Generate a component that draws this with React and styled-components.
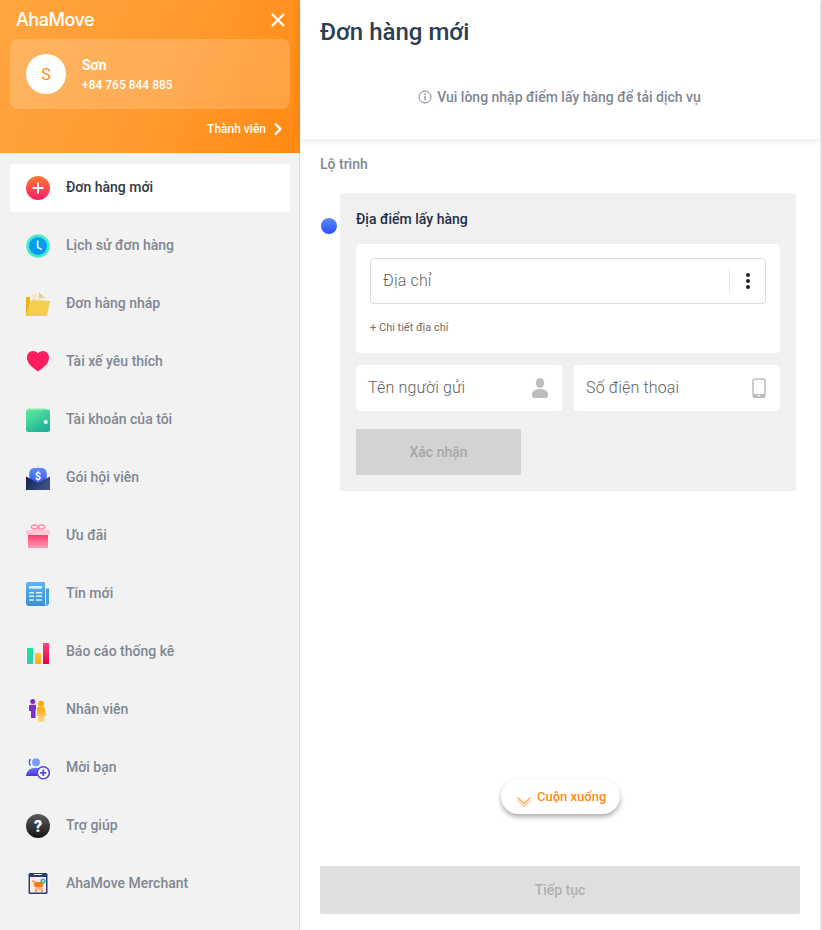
import React from "react";
import styled, { createGlobalStyle } from "styled-components";

const Global = createGlobalStyle`
  html, body { margin: 0; padding: 0; background: #fff; }
  body { font-family: Roboto, "Noto Sans", sans-serif; overflow: hidden; }
  * { box-sizing: border-box; }
`;

const Page = styled.div`
  display: flex;
  width: 822px;
  height: 930px;
  overflow: hidden;
`;

const Sidebar = styled.aside`
  width: 300px;
  height: 930px;
  flex: none;
  display: flex;
  flex-direction: column;
  background: #f2f2f2;
`;

const Head = styled.header`
  height: 153px;
  flex: none;
  padding: 0 10px;
  background: linear-gradient(115deg, #ffa53f 0%, #ff9a2e 55%, #ff8a12 100%);
  color: #fff;
  display: flex;
  flex-direction: column;
`;

const LogoRow = styled.div`
  height: 39px;
  padding: 0 4px 0 6px;
  display: flex;
  align-items: center;
  justify-content: space-between;
`;

const Logo = styled.span`
  font-family: Inter, sans-serif;
  font-size: 18px;
  font-weight: 500;
  letter-spacing: -0.45px;
`;

const Profile = styled.div`
  height: 70px;
  padding: 0 16px;
  display: flex;
  align-items: center;
  gap: 16px;
  border-radius: 8px;
  background: rgba(255, 255, 255, 0.18);
`;

const Avatar = styled.div`
  width: 40px;
  height: 40px;
  border-radius: 50%;
  background: #fff;
  color: #ff8a12;
  font-size: 16px;
  display: flex;
  align-items: center;
  justify-content: center;
`;

const ProfileText = styled.div`
  display: flex;
  flex-direction: column;
  gap: 5px;
`;

const ProfileName = styled.div`
  font-size: 14px;
  line-height: 16px;
  font-weight: 700;
`;

const ProfilePhone = styled.div`
  font-size: 12px;
  line-height: 14px;
  font-weight: 500;
`;

const MemberRow = styled.div`
  flex: 1;
  padding: 0 7px 4px 0;
  display: flex;
  align-items: center;
  justify-content: flex-end;
  gap: 7px;
  font-size: 12px;
  font-weight: 500;
`;

const Nav = styled.nav`
  flex: 1;
  padding-top: 11px;
  display: flex;
  flex-direction: column;
  gap: 10px;
  border-right: 1px solid #d9d9d9;
`;

const NavItem = styled.div`
  height: 48px;
  flex: none;
  margin: 0 9px 0 10px;
  padding-left: 16px;
  display: flex;
  align-items: center;
  gap: 16px;
  border-radius: 4px;
  background: ${(p) => (p.$active ? "#fff" : "transparent")};
  color: ${(p) => (p.$active ? "#333a45" : "#808792")};
  font-size: 14px;
  font-weight: 500;
`;

const NavLabel = styled.span`
  padding-bottom: 2px;
`;

const IconBox = styled.svg`
  width: 24px;
  height: 24px;
  flex: none;
  overflow: hidden;
`;

const Main = styled.main`
  position: relative;
  flex: none;
  width: 520px;
  height: 930px;
  display: flex;
  flex-direction: column;
  background: #fff;
`;

const Scrollbar = styled.div`
  flex: 1;
  height: 930px;
  background: #e6e6e6;
`;

const TopBar = styled.div`
  height: 139px;
  flex: none;
  padding: 18px 20px 0;
  background: #fff;
  box-shadow: 0 2px 8px rgba(0, 0, 0, 0.1);
  display: flex;
  flex-direction: column;
`;

const Title = styled.h1`
  margin: 0;
  font-size: 24px;
  line-height: 28px;
  font-weight: 500;
  color: #2c3e50;
`;

const Notice = styled.div`
  margin-top: 39px;
  padding-right: 1px;
  display: flex;
  align-items: center;
  justify-content: center;
  gap: 5px;
  font-size: 14px;
  line-height: 24px;
  font-weight: 500;
  color: #808792;
`;

const SectionLabel = styled.div`
  margin: 17px 20px 0;
  font-size: 14px;
  line-height: 16px;
  font-weight: 500;
  color: #808792;
`;

const RouteRow = styled.div`
  margin: 21px 24px 0 21px;
  display: flex;
  align-items: flex-start;
  gap: 3px;
`;

const Dot = styled.div`
  width: 16px;
  height: 16px;
  margin-top: 25px;
  flex: none;
  border-radius: 50%;
  background: linear-gradient(180deg, #5b8cf5 0%, #2a4dff 100%);
`;

const StopCard = styled.section`
  flex: 1;
  height: 298px;
  padding: 16px;
  border-radius: 4px;
  background: #f0f0f0;
`;

const StopTitle = styled.div`
  font-size: 14px;
  line-height: 20px;
  font-weight: 500;
  color: #1f2d45;
`;

const AddressCard = styled.div`
  margin-top: 15px;
  height: 109px;
  padding: 14px;
  background: #fff;
  border-radius: 4px;
`;

const AddressInput = styled.div`
  height: 46px;
  padding-left: 12px;
  border: 1px solid #dcdcdc;
  border-radius: 4px;
  display: flex;
  align-items: center;
`;

const FieldText = styled.span`
  flex: 1;
  padding-bottom: 2px;
  font-size: 16px;
  font-weight: 300;
  letter-spacing: 0.17px;
  color: #5f5f5f;
`;

const MenuButton = styled.div`
  width: 36px;
  height: 24px;
  border-left: 1px solid #e6e6e6;
  display: flex;
  flex-direction: column;
  align-items: center;
  justify-content: center;
  gap: 2px;
`;

const MenuDot = styled.i`
  width: 4px;
  height: 4px;
  border-radius: 50%;
  background: #222;
`;

const DetailLink = styled.div`
  margin-top: 17px;
  font-size: 11px;
  line-height: 14px;
  color: #7b6a66;
`;

const FieldRow = styled.div`
  margin-top: 12px;
  display: grid;
  grid-template-columns: 1fr 1fr;
  gap: 12px;
`;

const Field = styled.div`
  height: 46px;
  padding: 0 14px 0 12px;
  background: #fff;
  border-radius: 4px;
  display: flex;
  align-items: center;
`;

const ConfirmButton = styled.div`
  margin-top: 18px;
  width: 165px;
  height: 46px;
  border-radius: 2px;
  background: #d3d3d3;
  color: #a6a6a6;
  font-size: 14px;
  font-weight: 500;
  display: flex;
  align-items: center;
  justify-content: center;
`;

const Spacer = styled.div`
  flex: 1;
`;

const ScrollPill = styled.div`
  position: absolute;
  left: 201px;
  top: 779px;
  width: 119px;
  height: 35px;
  padding-left: 15px;
  display: flex;
  align-items: center;
  gap: 5px;
  border-radius: 18px;
  background: #fff;
  box-shadow: 0 3px 5px rgba(0, 0, 0, 0.32);
  color: #ff8a12;
  font-size: 13px;
  font-weight: 500;
`;

const PillChevron = styled.svg`
  width: 16px;
  height: 12px;
  margin-top: 10px;
  flex: none;
`;

const NextButton = styled.div`
  margin: 0 20px 16px;
  height: 48px;
  border-radius: 2px;
  background: #dfdfdf;
  color: #b0b0b0;
  font-size: 14px;
  font-weight: 500;
  display: flex;
  align-items: center;
  justify-content: center;
`;

const Icon = ({ children }) => <IconBox viewBox="0 0 24 24">{children}</IconBox>;

const PlusIcon = () => (
  <Icon>
    <defs><linearGradient id="pl" x1="0" y1="0" x2="0" y2="1"><stop offset="0" stopColor="#ff7a2e" /><stop offset="1" stopColor="#ff1a6c" /></linearGradient></defs>
    <circle cx="12" cy="12" r="12" fill="url(#pl)" />
    <path d="M12 6.5v11M6.5 12h11" stroke="#fff" strokeWidth="2" />
  </Icon>
);

const ClockIcon = () => (
  <Icon>
    <circle cx="12" cy="12" r="11.8" fill="#48eec8" />
    <circle cx="12" cy="12" r="8.6" fill="#079cf2" stroke="#079cf2" strokeWidth="1.4" strokeDasharray="1.6 1.2" />
    <path d="M11.7 6.6v6.8l4 2" fill="none" stroke="#fff" strokeWidth="1.6" />
  </Icon>
);

const FolderIcon = () => (
  <Icon>
    <path d="M0 5h6v19H0z" fill="#eab31c" />
    <path d="M4 0h9l6 6v12H4z" fill="#f7eeda" />
    <path d="M13 0l6 6h-6z" fill="#dfcfa4" />
    <path d="M6 4h5M6 7h9" stroke="#e5d9b8" strokeWidth="1" />
    <path d="M5.5 8l18.5 1-3 15H0l4-14z" fill="#f3cf4d" />
  </Icon>
);

const HeartIcon = () => (
  <Icon>
    <path d="M12 21.5C6.5 17.5 1 14 1 7.6 1 3.8 3.8 1 7 1c2.2 0 3.9 1 5 2.6C13.1 2 14.8 1 17 1c3.2 0 6 2.8 6 6.6 0 6.4-5.5 9.9-11 13.9z" fill="#ff1d5c" />
  </Icon>
);

const WalletIcon = () => (
  <Icon>
    <defs><linearGradient id="wa" x1="0" y1="0" x2="0.6" y2="1"><stop offset="0" stopColor="#62ec9c" /><stop offset="1" stopColor="#1fb29a" /></linearGradient></defs>
    <path d="M3 0h16a2 2 0 0 1 2 2v2H1V2a2 2 0 0 1 2-2z" fill="#b4f3cc" />
    <rect x="0" y="1.6" width="24" height="22.4" rx="2" fill="url(#wa)" />
    <circle cx="19.7" cy="14" r="2" fill="#fff" />
  </Icon>
);

const EnvelopeIcon = () => (
  <Icon>
    <defs>
      <linearGradient id="en" x1="0" y1="0" x2="1" y2="0.4"><stop offset="0" stopColor="#12214d" /><stop offset="1" stopColor="#3d5284" /></linearGradient>
      <linearGradient id="co" x1="0" y1="0" x2="0" y2="1"><stop offset="0" stopColor="#5d8bff" /><stop offset="1" stopColor="#3156e8" /></linearGradient>
    </defs>
    <path d="M12 0l9 7v4H3V7z" fill="#d5e1f5" />
    <rect x="3.3" y="2" width="17.4" height="16" rx="5" fill="url(#co)" />
    <path d="M0 10.5l12 6.5 12-6.5V24H0z" fill="url(#en)" />
    <text x="12" y="13.6" textAnchor="middle" fontFamily="Roboto" fontWeight="700" fontSize="10.5" fill="#fff">$</text>
  </Icon>
);

const GiftIcon = () => (
  <Icon>
    <defs><linearGradient id="gi" x1="0" y1="0" x2="0" y2="1"><stop offset="0" stopColor="#ff3d6e" /><stop offset="1" stopColor="#ff9db4" /></linearGradient></defs>
    <ellipse cx="8.5" cy="3" rx="3.2" ry="2" fill="none" stroke="#ff8ba8" strokeWidth="1.4" />
    <ellipse cx="15.5" cy="3" rx="3.2" ry="2" fill="none" stroke="#ff8ba8" strokeWidth="1.4" />
    <rect x="0" y="6" width="24" height="5" fill="#ffc7d3" />
    <rect x="2" y="11" width="20" height="13" fill="url(#gi)" />
  </Icon>
);

const NewsIcon = () => (
  <Icon>
    <defs><linearGradient id="nw" x1="0" y1="0" x2="0" y2="1"><stop offset="0" stopColor="#5ab4f0" /><stop offset="1" stopColor="#3a8fd5" /></linearGradient></defs>
    <path d="M19 6h4v15a3 3 0 0 1-3 3h-3z" fill="#d2e9fa" />
    <path d="M20 6.5h3V21a3 3 0 0 1-2 2.8h-1z" fill="#4a9fe3" />
    <path d="M2 0h17v21a3 3 0 0 0 1 3H3a3 3 0 0 1-3-3V2a2 2 0 0 1 2-2z" fill="url(#nw)" />
    <path d="M3 4h13v2.7H3z" fill="#dcefff" />
    <path d="M3 10.7h5M3 14.2h5M3 18h5M10 10.7h6M10 14.2h6M10 18h6" stroke="#dcefff" strokeWidth="1.6" />
  </Icon>
);

const ChartIcon = () => (
  <Icon>
    <defs>
      <linearGradient id="b1" x1="0" y1="0" x2="0" y2="1"><stop offset="0" stopColor="#0fe8a2" /><stop offset="1" stopColor="#3ec6a4" /></linearGradient>
      <linearGradient id="b2" x1="0" y1="0" x2="0" y2="1"><stop offset="0" stopColor="#ffc93a" /><stop offset="1" stopColor="#ffa41c" /></linearGradient>
      <linearGradient id="b3" x1="0" y1="0" x2="0" y2="1"><stop offset="0" stopColor="#ff4a78" /><stop offset="1" stopColor="#e5004a" /></linearGradient>
    </defs>
    <rect x="1" y="8" width="6" height="16" fill="url(#b1)" />
    <rect x="9" y="13" width="6" height="11" fill="url(#b2)" />
    <rect x="17" y="3" width="6" height="21" fill="url(#b3)" />
  </Icon>
);

const StaffIcon = () => (
  <Icon>
    <defs><linearGradient id="st" x1="0" y1="0" x2="0" y2="1"><stop offset="0" stopColor="#ffa50a" /><stop offset="1" stopColor="#ffd98c" /></linearGradient></defs>
    <circle cx="6.7" cy="3.5" r="2.5" fill="#7d2fc8" />
    <path d="M3 8.5c0-1 .8-1.8 1.8-1.8H10V12h-.5v8H5v-7H3z" fill="#7d2fc8" />
    <circle cx="15" cy="5.8" r="3" fill="#ffa50a" />
    <path d="M11 11c0-1.3 1-2.2 2.2-2.2h3.6c1.2 0 2.2.9 2.2 2.2l1 7h-1.8v6h-6v-6H11z" fill="url(#st)" />
  </Icon>
);

const InviteIcon = () => (
  <Icon>
    <defs><linearGradient id="inv" x1="0" y1="0" x2="0" y2="1"><stop offset="0" stopColor="#6a7bff" /><stop offset="1" stopColor="#5030d8" /></linearGradient></defs>
    <path d="M4.5 3a5.5 5.5 0 0 0 0 6.5" fill="none" stroke="#4f66e8" strokeWidth="1.5" />
    <circle cx="10" cy="6.3" r="4" fill="#7c9bff" />
    <path d="M0 20c.5-5 4-8.2 9.5-8.2 3 0 5.5 1 7.2 2.7L11 20z" fill="url(#inv)" />
    <circle cx="17.3" cy="16.8" r="6" fill="#fff" stroke="#5a45e0" strokeWidth="1.6" />
    <path d="M17.3 13.6v6.4M14.1 16.8h6.4" stroke="#5a45e0" strokeWidth="1.8" />
  </Icon>
);

const HelpIcon = () => (
  <Icon>
    <defs><linearGradient id="he" x1="0" y1="0" x2="0" y2="1"><stop offset="0" stopColor="#5c5c5c" /><stop offset="1" stopColor="#161616" /></linearGradient></defs>
    <circle cx="12" cy="12" r="12" fill="url(#he)" />
    <text x="12" y="17.5" textAnchor="middle" fontFamily="Roboto" fontWeight="900" fontSize="16" fill="#fff">?</text>
  </Icon>
);

const MerchantIcon = () => (
  <Icon>
    <circle cx="12" cy="12" r="12" fill="#f7f7f0" />
    <rect x="2.5" y="1" width="19" height="21" rx="1.5" fill="#2b3a78" />
    <rect x="8" y="2" width="8" height="1" fill="#fff" />
    <rect x="4" y="5" width="16" height="15.5" fill="#fbeee0" />
    <path d="M6 9h2l1 6h7l1.2-4.4H8.4" fill="#ff7a1c" stroke="#ff7a1c" strokeWidth="1" />
    <path d="M9 17h8" stroke="#ff7a1c" strokeWidth="1" />
    <circle cx="10" cy="19" r="1" fill="#ff7a1c" />
    <circle cx="16" cy="19" r="1" fill="#ff7a1c" />
    <circle cx="17" cy="9" r="2.6" fill="#2fb98f" />
    <path d="M16 9h2M17 8v2" stroke="#fff" strokeWidth="0.7" />
  </Icon>
);

const navItems = [
  ["Đơn hàng mới", PlusIcon],
  ["Lịch sử đơn hàng", ClockIcon],
  ["Đơn hàng nháp", FolderIcon],
  ["Tài xế yêu thích", HeartIcon],
  ["Tài khoản của tôi", WalletIcon],
  ["Gói hội viên", EnvelopeIcon],
  ["Ưu đãi", GiftIcon],
  ["Tin mới", NewsIcon],
  ["Báo cáo thống kê", ChartIcon],
  ["Nhân viên", StaffIcon],
  ["Mời bạn", InviteIcon],
  ["Trợ giúp", HelpIcon],
  ["AhaMove Merchant", MerchantIcon],
];

export default function App() {
  return (
    <Page>
      <Global />
      <Sidebar>
        <Head>
          <LogoRow>
            <Logo>AhaMove</Logo>
            <svg width="16" height="16" viewBox="0 0 16 16">
              <path d="M2 2l12 12M14 2L2 14" stroke="#fff" strokeWidth="2.2" />
            </svg>
          </LogoRow>
          <Profile>
            <Avatar>S</Avatar>
            <ProfileText>
              <ProfileName>Sơn</ProfileName>
              <ProfilePhone>+84 765 844 885</ProfilePhone>
            </ProfileText>
          </Profile>
          <MemberRow>
            Thành viên
            <svg width="10" height="14" viewBox="0 0 10 14">
              <path d="M2 1.5l5.5 5.5L2 12.5" fill="none" stroke="#fff" strokeWidth="2.2" />
            </svg>
          </MemberRow>
        </Head>
        <Nav>
          {navItems.map(([label, Glyph], i) => (
            <NavItem key={label} $active={i === 0}>
              <Glyph />
              <NavLabel>{label}</NavLabel>
            </NavItem>
          ))}
        </Nav>
      </Sidebar>
      <Main>
        <TopBar>
          <Title>Đơn hàng mới</Title>
          <Notice>
            <svg width="14" height="14" viewBox="0 0 14 14">
              <circle cx="7" cy="7" r="6" fill="none" stroke="#808792" strokeWidth="1" />
              <path d="M7 6v4.2" stroke="#808792" strokeWidth="1.2" />
              <circle cx="7" cy="4.3" r="0.8" fill="#808792" />
            </svg>
            Vui lòng nhập điểm lấy hàng để tải dịch vụ
          </Notice>
        </TopBar>
        <SectionLabel>Lộ trình</SectionLabel>
        <RouteRow>
          <Dot />
          <StopCard>
            <StopTitle>Địa điểm lấy hàng</StopTitle>
            <AddressCard>
              <AddressInput>
                <FieldText>Địa chỉ</FieldText>
                <MenuButton>
                  <MenuDot />
                  <MenuDot />
                  <MenuDot />
                </MenuButton>
              </AddressInput>
              <DetailLink>+ Chi tiết địa chỉ</DetailLink>
            </AddressCard>
            <FieldRow>
              <Field>
                <FieldText>Tên người gửi</FieldText>
                <svg width="16" height="20" viewBox="0 0 16 20">
                  <ellipse cx="8" cy="5" rx="4.2" ry="5" fill="#bdbdbd" />
                  <path d="M0 17c0-4 3-6 8-6s8 2 8 6c0 2-1 3-3 3H3c-2 0-3-1-3-3z" fill="#bdbdbd" />
                </svg>
              </Field>
              <Field>
                <FieldText>Số điện thoại</FieldText>
                <svg width="14" height="20" viewBox="0 0 14 20">
                  <rect x="1" y="1" width="12" height="18.4" rx="2" fill="none" stroke="#bdbdbd" strokeWidth="1.5" />
                  <path d="M1 16h12v1.5a2 2 0 0 1-2 2H3a2 2 0 0 1-2-2z" fill="#bdbdbd" />
                  <circle cx="7" cy="17.6" r="0.9" fill="#fff" />
                </svg>
              </Field>
            </FieldRow>
            <ConfirmButton>Xác nhận</ConfirmButton>
          </StopCard>
        </RouteRow>
        <Spacer />
        <ScrollPill>
          <PillChevron viewBox="0 0 16 12">
            <path d="M1.5 3l6.5 6 6.5-6" fill="none" stroke="#ffdcb8" strokeWidth="2" transform="translate(0 1.5)" />
            <path d="M1.5 1.5l6.5 6 6.5-6" fill="none" stroke="#ffab5c" strokeWidth="1.5" />
          </PillChevron>
          Cuộn xuống
        </ScrollPill>
        <NextButton>Tiếp tục</NextButton>
      </Main>
      <Scrollbar />
    </Page>
  );
}
